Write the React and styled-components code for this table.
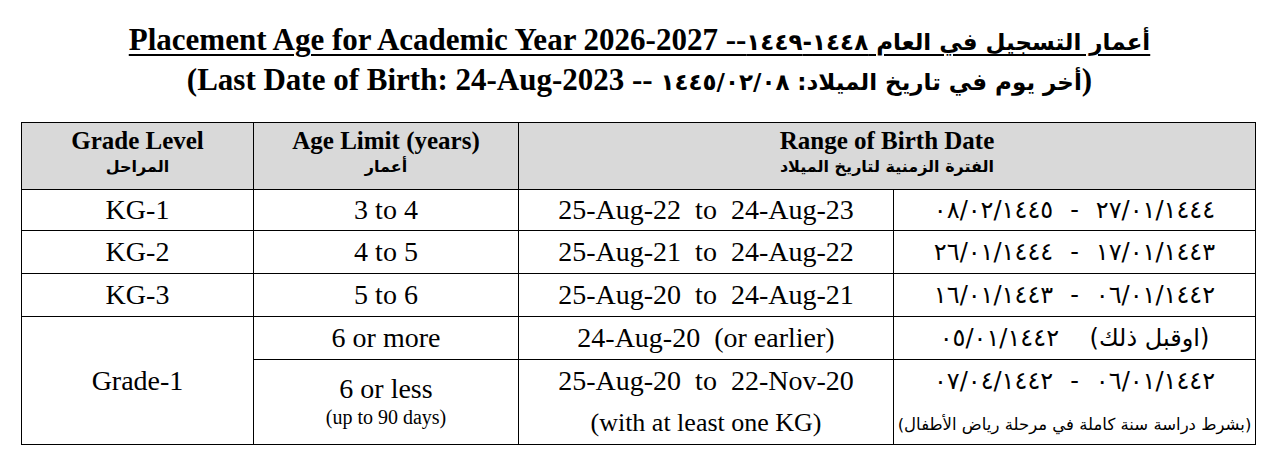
import React from 'react'
import styled, { createGlobalStyle } from 'styled-components'

const GlobalStyle = createGlobalStyle`
  body {
    margin: 0;
    background: #fff;
    color: #000;
    font-family: "Liberation Serif", "DejaVu Sans", serif;
  }
`

const Page = styled.div`
  width: 1279px;
  padding-top: 21px;
`

const TitleLine = styled.div`
  text-align: center;
  font-weight: bold;
  font-size: 31px;
  line-height: 37px;
  white-space: pre;
`

const Underlined = styled.span`
  text-decoration: underline;
  text-decoration-thickness: 2px;
  text-underline-offset: 4px;
`

const Ar = styled.span`
  font-family: "DejaVu Sans", sans-serif;
  font-size: ${p => p.$size || 22}px;
`

const Grid = styled.table`
  border-collapse: collapse;
  table-layout: fixed;
  width: 1234px;
  margin: 21px 0 0 21px;
  font-size: 28px;
`

const Head = styled.th`
  background: #d9d9d9;
  border: 1.5px solid #000;
  height: 62px;
  padding: 4px 0 0;
  font-weight: bold;
  font-size: 25px;
  line-height: 28px;
  vertical-align: top;
`

const SubHead = styled.div`
  font-family: "DejaVu Sans", sans-serif;
  font-size: 16px;
  line-height: 24px;
`

const Cell = styled.td`
  border: 1.5px solid #000;
  height: ${p => p.$h}px;
  padding: 0;
  text-align: center;
  vertical-align: middle;
  line-height: 30px;
  white-space: pre;
`

const HijriCell = styled(Cell).attrs({ dir: 'rtl' })`
  font-family: "DejaVu Sans", sans-serif;
  font-size: 24px;
`

const Digits = styled.span`
  letter-spacing: 3.5px;
`

const Dash = styled.span`
  padding: 0 17px;
`

const Stack = styled.div`
  display: flex;
  flex-direction: column;
  align-items: center;
  justify-content: ${p => p.$spread ? 'space-between' : 'center'};
  height: ${p => p.$h}px;
  padding: ${p => p.$pad || 0}px 0;
  box-sizing: border-box;
`

const Small = styled.div`
  font-size: ${p => p.$size || 20}px;
  line-height: ${p => p.$lh || 26}px;
`

const Note = styled.div`
  font-family: "DejaVu Sans", sans-serif;
  font-size: 16.5px;
  line-height: 26px;
`

const rows = [
  { grade: 'KG-1', age: '3 to 4', range: '25-Aug-22  to  24-Aug-23', from: '٢٧/٠١/١٤٤٤', to: '٠٨/٠٢/١٤٤٥', h: 40 },
  { grade: 'KG-2', age: '4 to 5', range: '25-Aug-21  to  24-Aug-22', from: '١٧/٠١/١٤٤٣', to: '٢٦/٠١/١٤٤٤', h: 42 },
  { grade: 'KG-3', age: '5 to 6', range: '25-Aug-20  to  24-Aug-21', from: '٠٦/٠١/١٤٤٢', to: '١٦/٠١/١٤٤٣', h: 42 },
]

const HijriRange = ({ from, to }) => (
  <>
    <Digits>{from}</Digits>
    <Dash>-</Dash>
    <Digits>{to}</Digits>
  </>
)

const App = () => {
  return (
    <Page>
      <GlobalStyle />
      <TitleLine>
        <Underlined>
          {'Placement Age for Academic Year 2026-2027 --'}
          <Ar $size={23} dir="rtl">أعمار التسجيل في العام ١٤٤٨-١٤٤٩</Ar>
        </Underlined>
      </TitleLine>
      <TitleLine>
        {'(Last Date of Birth: 24-Aug-2023 -- '}
        <Ar $size={23}>١٤٤٥/٠٢/٠٨</Ar>
        {' '}
        <Ar $size={23} dir="rtl">أخر يوم في تاريخ الميلاد:</Ar>
        {')'}
      </TitleLine>

      <Grid>
        <colgroup>
          <col style={{ width: 232 }} />
          <col style={{ width: 265 }} />
          <col style={{ width: 375 }} />
          <col style={{ width: 362 }} />
        </colgroup>
        <thead>
          <tr>
            <Head>
              Grade Level
              <SubHead dir="rtl">المراحل</SubHead>
            </Head>
            <Head>
              Age Limit (years)
              <SubHead dir="rtl">أعمار</SubHead>
            </Head>
            <Head colSpan={2}>
              Range of Birth Date
              <SubHead dir="rtl">الفترة الزمنية لتاريخ الميلاد</SubHead>
            </Head>
          </tr>
        </thead>
        <tbody>
          {rows.map(r => (
            <tr key={r.grade}>
              <Cell $h={r.h}>{r.grade}</Cell>
              <Cell $h={r.h}>{r.age}</Cell>
              <Cell $h={r.h}>{r.range}</Cell>
              <HijriCell $h={r.h}>
                <HijriRange from={r.from} to={r.to} />
              </HijriCell>
            </tr>
          ))}
          <tr>
            <Cell rowSpan={2}>Grade-1</Cell>
            <Cell $h={42}>6 or more</Cell>
            <Cell $h={42}>{'24-Aug-20  (or earlier)'}</Cell>
            <HijriCell $h={42}>
              {'(اوقبل ذلك)    '}
              <Digits>٠٥/٠١/١٤٤٢</Digits>
            </HijriCell>
          </tr>
          <tr>
            <Cell>
              <Stack $h={84} $pad={14}>
                <div>6 or less</div>
                <Small>(up to 90 days)</Small>
              </Stack>
            </Cell>
            <Cell>
              <Stack $h={84} $pad={6} $spread>
                <div>{'25-Aug-20  to  22-Nov-20'}</div>
                <Small $size={26} $lh={30}>(with at least one KG)</Small>
              </Stack>
            </Cell>
            <HijriCell>
              <Stack $h={84} $pad={6} $spread>
                <div>
                  <HijriRange from="٠٦/٠١/١٤٤٢" to="٠٧/٠٤/١٤٤٢" />
                </div>
                <Note>(بشرط دراسة سنة كاملة في مرحلة رياض الأطفال)</Note>
              </Stack>
            </HijriCell>
          </tr>
        </tbody>
      </Grid>
    </Page>
  )
}

export default App
